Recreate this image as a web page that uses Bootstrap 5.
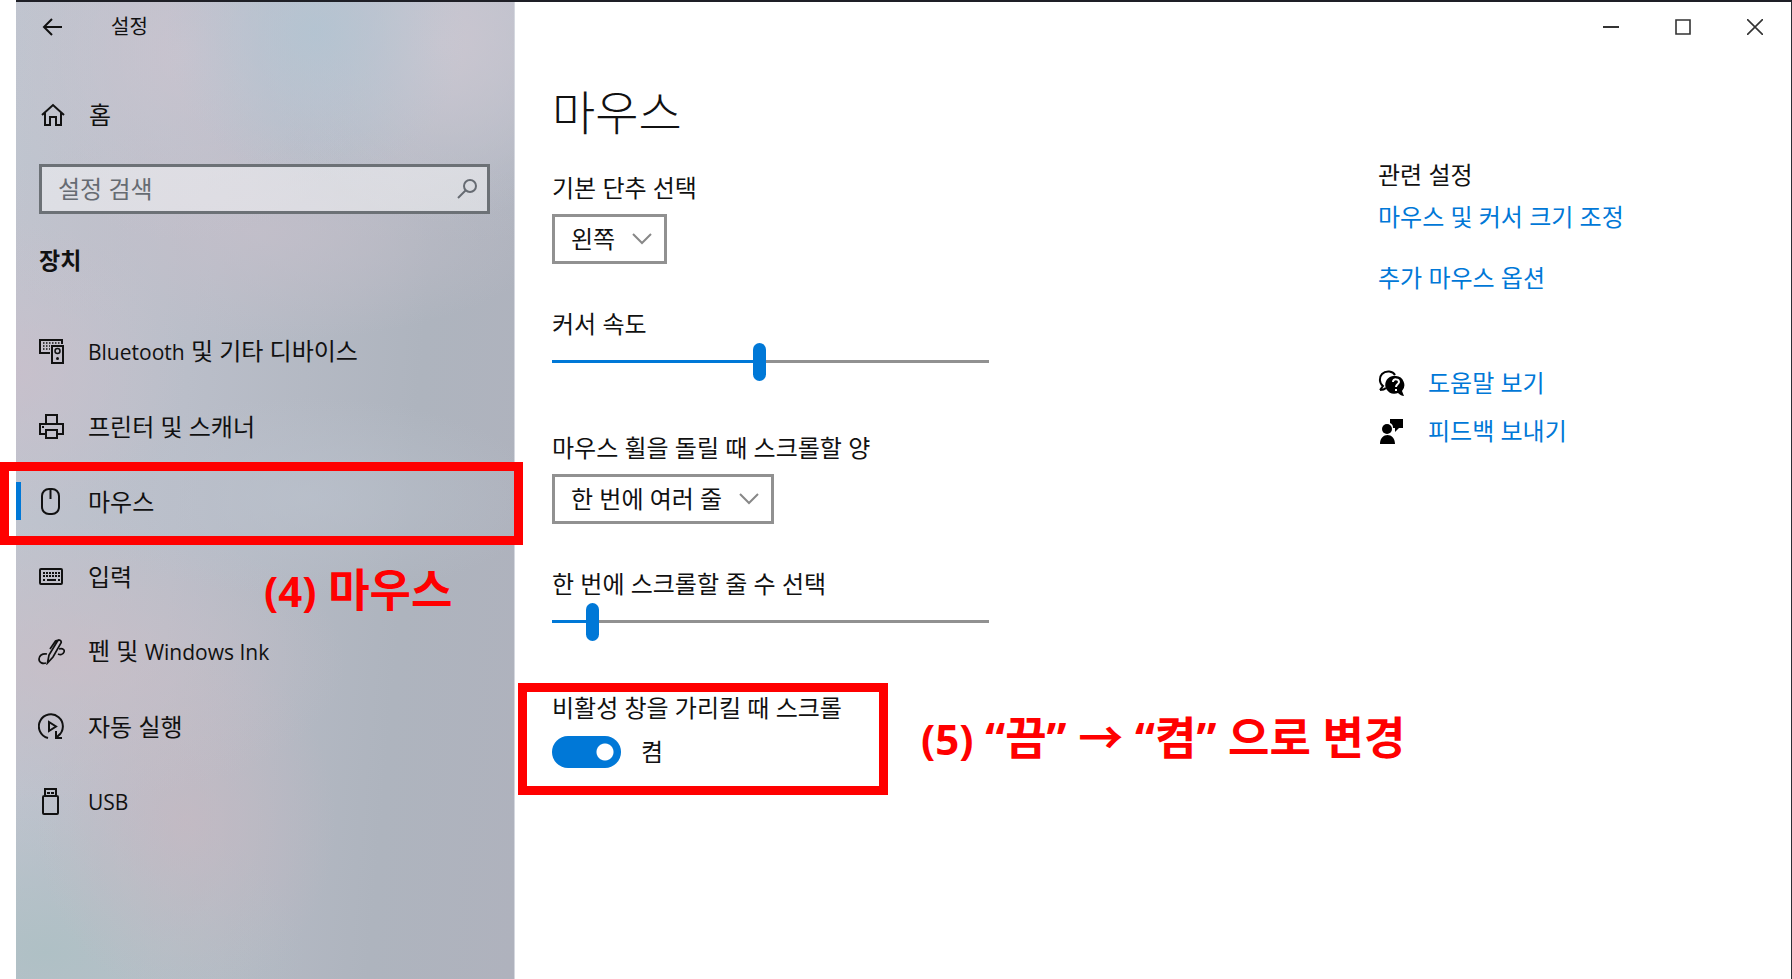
<!DOCTYPE html>
<html lang="ko">
<head>
<meta charset="utf-8">
<meta name="viewport" content="width=device-width, initial-scale=1">
<title>설정 - 마우스</title>
<link href="https://cdn.jsdelivr.net/npm/bootstrap@5.3.0/dist/css/bootstrap.min.css" rel="stylesheet">
<style>
:root { --accent: #0078d7; --edge: #919191; --callout: #ff0000; }
body {
  font-family: "Open Sans", "Noto Sans CJK KR", sans-serif;
  font-size: 24px; line-height: 32px; color: #111; background: #fff;
}
.window { min-height: 100vh; margin-left: 16px; border-top: 2px solid #1e1f26; border-right: 1px solid #2b2f36; }
.sidebar {
  width: 499px; border-right: 1px solid #d5d8df;
  background:
    radial-gradient(circle 150px at 300px 30px, #b1c4d2cc 0%, #b1c4d200 100%),
    radial-gradient(circle 190px at 170px 50px, #cbc4cfcc 0%, #cbc4cf00 100%),
    radial-gradient(circle 180px at 425px 40px, #cac6d0 0%, #cac6d000 100%),
    radial-gradient(ellipse 300px 110px at 240px 230px, #c4bfcacc 0%, #c4bfca00 100%),
    radial-gradient(ellipse 170px 150px at 0 370px, #c9bfcbcc 0%, #c9bfcb00 100%),
    radial-gradient(ellipse 240px 100px at 290px 495px, #bbc2cdaa 0%, #bbc2cd00 100%),
    radial-gradient(ellipse 270px 140px at 60px 660px, #c9bec7cc 0%, #c9bec700 100%),
    radial-gradient(ellipse 150px 180px at 170px 820px, #c6b9c2bb 0%, #c6b9c200 100%),
    radial-gradient(ellipse 260px 160px at 30px 950px, #afc0c5 0%, #afc0c500 100%),
    radial-gradient(ellipse 500px 240px at 420px 0, #bcc2ce 0%, #bcc2ce00 100%),
    linear-gradient(95deg, #c0c5cf 0%, #babec9 35%, #aeb4be 75%, #afb2bd 100%);
}
.caption { height: 50px; }
.caption-text { font-size: 20px; line-height: 28px; }
.plain { border: 0; background: none; padding: 0; color: inherit; display: flex; align-items: center; justify-content: center; }
.back { width: 24px; margin-left: 24px; margin-right: 47px; }
.ctl { width: 72px; height: 50px; color: #333; }
svg { display: block; flex: none; fill: none; stroke: currentColor; stroke-width: 2; }
.home { height: 50px; margin-top: 38px; padding-left: 25px; gap: 24px; color: inherit; }
.search { margin: 24px 24px 0 23px; }
.search input {
  height: 50px; border: 3px solid #6c7176; border-radius: 0; padding: 0 60px 2px 16px;
  font-size: 24px; line-height: 32px; background: #ffffff77; color: #111;
}
.search input::placeholder { color: #666b72; opacity: 1; }
.search svg { position: absolute; right: 12px; top: 14px; color: #666b72; }
.group-title { font-size: 23px; line-height: 32px; font-weight: 700; margin: 30px 0 38px 23px; }
.side-nav .nav-item { position: relative; }
.side-nav .nav-link { height: 75px; padding: 0 0 0 22px; gap: 23px; color: inherit; display: flex; align-items: center; }
.side-nav .nav-link.active::before { content: ""; position: absolute; left: 0; top: 18px; width: 5px; height: 38px; background: var(--accent); }
.latin { font-size: 21px; }
.frame { position: absolute; border: 9px solid var(--callout); pointer-events: none; }
.frame-item { inset: -2px -9px -6px -16px; }
.frame-toggle { inset: -9px auto -27px -34px; width: 370px; }
.note { position: absolute; color: var(--callout); font-size: 45px; line-height: 56px; font-weight: 700; white-space: nowrap; }
.note .num { font-size: 42px; }
.note-item { left: 248px; top: 98px; }
.note-toggle { left: 369px; top: 18px; }
.settings { padding-left: 37px; }
h1 { font-size: 47px; line-height: 64px; font-weight: 300; margin: 28px 0 28px; }
.setting { margin-bottom: 44px; }
.setting > label { display: block; margin-bottom: 10px; }
.toggle-label { margin-bottom: 12px; }
.picker {
  width: auto; height: 50px; border: 3px solid var(--edge); border-radius: 0; padding: 0 48px 0 16px;
  font-size: 24px; line-height: 32px; color: #111;
  background: #fff url("data:image/svg+xml,%3Csvg xmlns='http://www.w3.org/2000/svg' viewBox='0 0 20 12'%3E%3Cpath d='M1 1l9 9 9-9' fill='none' stroke='%23888' stroke-width='2'/%3E%3C/svg%3E") no-repeat right 12px center / 20px 12px;
}
.slider { -webkit-appearance: none; appearance: none; display: block; width: 437px; max-width: 100%; height: 38px; margin: -8px 0 52px; background: none; }
.slider::-webkit-slider-runnable-track { height: 3px; background: linear-gradient(90deg, var(--accent) var(--fill), var(--edge) var(--fill)); }
.slider::-webkit-slider-thumb { -webkit-appearance: none; width: 13px; height: 38px; margin-top: -17px; border-radius: 7px; background: var(--accent); }
.switch-row { gap: 20px; }
.switch-row .form-check-input {
  width: 69px; height: 32px; margin: 0; border: 0; border-radius: 16px; float: none;
  background: var(--accent) radial-gradient(circle 9px at 53px 16px, #fff 8px, #fff0 9px);
}
.related { width: 413px; padding-top: 107px; }
.related a { color: #0078d7; text-decoration: none; }
.related .sizes { margin-top: 10px; }
.related .more { margin-top: 29px; }
.related .help { margin-top: 73px; }
.related .support { gap: 23px; color: #000; }
</style>
</head>
<body>
<div class="window d-flex">
  <aside class="sidebar flex-shrink-0">
    <div class="caption d-flex align-items-center">
      <button class="plain back" type="button" aria-label="뒤로"><svg width="22" height="20" viewBox="0 0 22 20"><path d="M21 10H3M11 2L3 10l8 8"/></svg></button>
      <span class="caption-text">설정</span>
    </div>
    <a class="home d-flex align-items-center text-decoration-none" href="#home">
      <svg width="24" height="24" viewBox="0 0 24 24"><path d="M1 12L12 2l11 10M4 10v12h5v-8h6v8h5V10"/></svg>
      <span>홈</span>
    </a>
    <div class="search position-relative">
      <input class="form-control" type="text" placeholder="설정 검색" aria-label="설정 검색">
      <svg width="21" height="21" viewBox="0 0 21 21"><circle cx="13" cy="8" r="6"/><path d="M9 12l-8 8"/></svg>
    </div>
    <h2 class="group-title">장치</h2>
    <ul class="side-nav nav flex-column">
      <li class="nav-item"><a class="nav-link" href="#bluetooth">
        <svg width="27" height="27" viewBox="0 0 27 27"><path d="M12 15H2V2h22v4M14 8h11v17H14z"/><path stroke-width="1.500" stroke-dasharray="1.500 1.500" d="M5 5h17M5 8h7M5 11h7"/><circle cx="19.500" cy="13" r="2.500" stroke-width="1.500"/><circle cx="19.500" cy="20.500" r="1.500" fill="currentColor" stroke="none"/></svg>
        <span><span class="latin">Bluetooth</span> 및 기타 디바이스</span></a></li>
      <li class="nav-item"><a class="nav-link" href="#printer">
        <svg width="27" height="27" viewBox="0 0 27 27"><path d="M8 11V2h11v9M7 21H2V11h23v10h-5M8 17h11v8H8zM4 14h2"/></svg>
        <span>프린터 및 스캐너</span></a></li>
      <li class="nav-item"><a class="nav-link active" href="#mouse" aria-current="page">
        <svg width="27" height="27" viewBox="0 0 27 27"><rect x="4" y="1" width="17" height="25" rx="7"/><path d="M12.500 1v10"/></svg>
        <span>마우스</span></a>
        <div class="frame frame-item"></div>
        <div class="note note-item"><span class="num">(4)</span> 마우스</div></li>
      <li class="nav-item"><a class="nav-link" href="#typing">
        <svg width="27" height="27" viewBox="0 0 27 27"><rect x="2" y="6" width="22" height="15" rx="1"/><path stroke-dasharray="2 1" d="M5 10h17M5 13h17"/><path d="M5 17h2M9 17h9M20 17h2"/></svg>
        <span>입력</span></a></li>
      <li class="nav-item"><a class="nav-link" href="#pen">
        <svg width="27" height="27" viewBox="0 0 27 27"><path stroke-width="1.700" d="M9.500 25l1.500-8 8.500-14c1-2 4.500-.5 3.500 2l-8 14zM12 11l5.500-8 3-1"/><path stroke-width="1.700" d="M9 16c-5-1-8 2-8 5 0 4 4 5 7 4M21 11c4-1 6 1 5 3-1 3-4 3-6 2"/></svg>
        <span>펜 및 <span class="latin">Windows Ink</span></span></a></li>
      <li class="nav-item"><a class="nav-link" href="#autoplay">
        <svg width="27" height="27" viewBox="0 0 27 27"><path d="M10 25A12 12 0 1 1 20 23M18 18v7h6M18 25l4-4"/><path d="M11 9v9l7-4.500z"/></svg>
        <span>자동 실행</span></a></li>
      <li class="nav-item"><a class="nav-link" href="#usb">
        <svg width="27" height="27" viewBox="0 0 27 27"><path d="M7 8V1h11v7M6 8h13c1 0 1 1 1 1v16c0 1-1 1-1 1H6c-1 0-1-1-1-1V9s0-1 1-1zM9 5h3M13 5h3"/></svg>
        <span class="latin">USB</span></a></li>
    </ul>
  </aside>

  <div class="flex-grow-1">
    <header class="caption d-flex justify-content-end">
      <button class="plain ctl" type="button" aria-label="최소화"><svg width="16" height="16" viewBox="0 0 16 16"><path d="M0 8h16"/></svg></button>
      <button class="plain ctl" type="button" aria-label="최대화"><svg width="16" height="16" viewBox="0 0 16 16"><path stroke-width="1.600" d="M1 1h14v14H1z"/></svg></button>
      <button class="plain ctl" type="button" aria-label="닫기"><svg width="16" height="16" viewBox="0 0 16 16"><path stroke-width="1.600" d="M0 0l16 16M16 0L0 16"/></svg></button>
    </header>
    <div class="d-flex">
      <main class="settings flex-grow-1">
        <h1>마우스</h1>
        <div class="setting">
          <label for="primary">기본 단추 선택</label>
          <select class="form-select picker" id="primary"><option>왼쪽</option></select>
        </div>
        <div class="setting">
          <label for="speed">커서 속도</label>
          <input class="slider" id="speed" type="range" min="0" max="40" value="19" style="--fill:47%">
        </div>
        <div class="setting">
          <label for="wheel">마우스 휠을 돌릴 때 스크롤할 양</label>
          <select class="form-select picker" id="wheel"><option>한 번에 여러 줄</option></select>
        </div>
        <div class="setting">
          <label for="lines">한 번에 스크롤할 줄 수 선택</label>
          <input class="slider" id="lines" type="range" min="0" max="100" value="8" style="--fill:8%">
        </div>
        <div class="position-relative">
          <div class="toggle-label" id="inactive">비활성 창을 가리킬 때 스크롤</div>
          <div class="switch-row form-switch d-flex align-items-center p-0">
            <input class="form-check-input" id="hover" type="checkbox" role="switch" aria-describedby="inactive" checked>
            <label for="hover">켬</label>
          </div>
          <div class="frame frame-toggle"></div>
          <div class="note note-toggle"><span class="num">(5)</span> “끔” → “켬” 으로 변경</div>
        </div>
      </main>
      <aside class="related flex-shrink-0">
        <div>관련 설정</div>
        <div class="sizes"><a href="#size">마우스 및 커서 크기 조정</a></div>
        <div class="more"><a href="#more">추가 마우스 옵션</a></div>
        <div class="support help d-flex align-items-center">
          <svg width="27" height="27" viewBox="0 0 27 27"><path d="M2 20l3-4C1 13 1 7 4 4c4-4 11-3 13 1M2 20c3 0 5-1 6-2"/><path fill="currentColor" stroke="none" d="M18 6a9 9 0 1 0 2 17c2 2 4 3 6 3l-2-5A9 9 0 0 0 18 6z"/><path stroke="#fff" d="M15 12c0-4 6-3 6 0 0 2-3 2-3 5M18 19v2"/></svg>
          <a href="#help">도움말 보기</a>
        </div>
        <div class="support d-flex align-items-center mt-3">
          <svg width="27" height="27" viewBox="0 0 27 27"><g fill="currentColor" stroke="none"><circle cx="9" cy="11" r="5"/><path d="M2 26c0-12 15-12 15 0zM12 1h13v9h-4l-4 4v-4h-2c0-3-1-4-3-5z"/></g></svg>
          <a href="#feedback">피드백 보내기</a>
        </div>
      </aside>
    </div>
  </div>
</div>
<script src="https://cdn.jsdelivr.net/npm/bootstrap@5.3.0/dist/js/bootstrap.bundle.min.js"></script>
</body>
</html>
